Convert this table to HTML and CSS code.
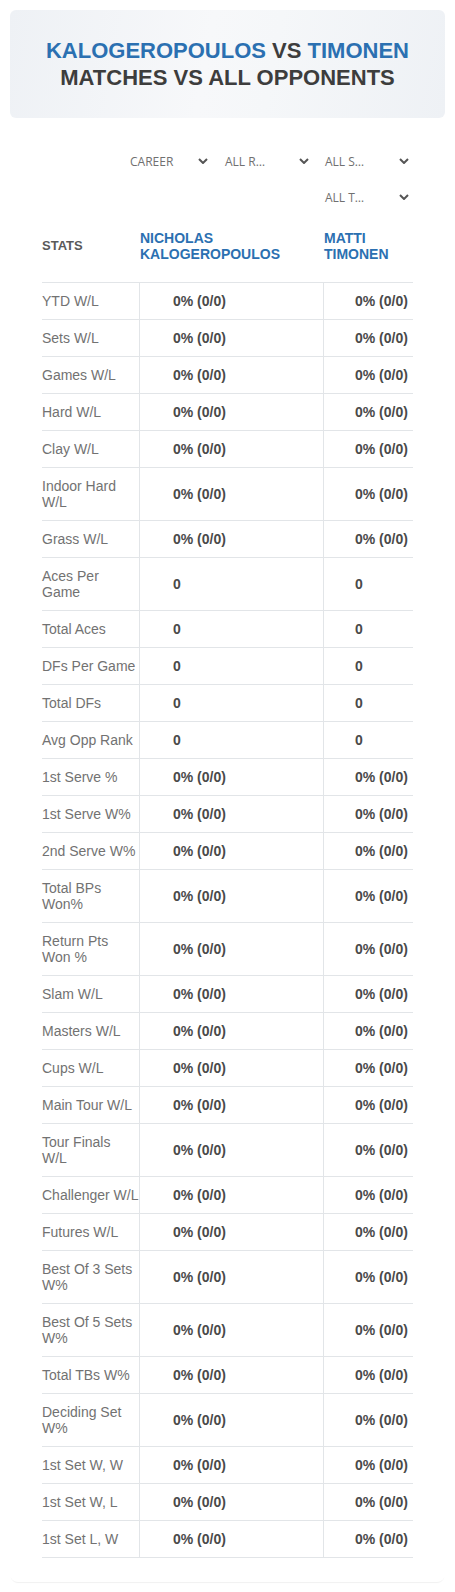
FILE: index.html
```html
<!DOCTYPE html>
<html lang="en">
<head>
<meta charset="utf-8">
<title>Kalogeropoulos vs Timonen</title>
<link rel="stylesheet" href="styles.css">
</head>
<body>
<div class="page">
  <header class="hero">
    <h1 class="hero-title">
      <span class="blue">KALOGEROPOULOS</span> VS <span class="blue">TIMONEN</span><br>
      MATCHES VS ALL OPPONENTS
    </h1>
  </header>

  <section class="card">
    <div class="filters">
      <div class="select select-first"><span>CAREER</span><svg class="chev" viewBox="0 0 10 6" width="10" height="6"><path d="M1 1l4 4 4-4" fill="none" stroke="#555" stroke-width="2"/></svg></div>
      <div class="select"><span>ALL R…</span><svg class="chev" viewBox="0 0 10 6" width="10" height="6"><path d="M1 1l4 4 4-4" fill="none" stroke="#555" stroke-width="2"/></svg></div>
      <div class="select"><span>ALL S…</span><svg class="chev" viewBox="0 0 10 6" width="10" height="6"><path d="M1 1l4 4 4-4" fill="none" stroke="#555" stroke-width="2"/></svg></div>
      <div class="select"><span>ALL T…</span><svg class="chev" viewBox="0 0 10 6" width="10" height="6"><path d="M1 1l4 4 4-4" fill="none" stroke="#555" stroke-width="2"/></svg></div>
    </div>

    <table class="stats">
      <colgroup><col class="c1"><col class="c2"><col class="c3"></colgroup>
      <thead>
        <tr>
          <th class="th-stats">STATS</th>
          <th class="th-player">NICHOLAS<br>KALOGEROPOULOS</th>
          <th class="th-player">MATTI<br>TIMONEN</th>
        </tr>
      </thead>
      <tbody>
        <tr><td>YTD W/L</td><td>0% (0/0)</td><td>0% (0/0)</td></tr>
        <tr><td>Sets W/L</td><td>0% (0/0)</td><td>0% (0/0)</td></tr>
        <tr><td>Games W/L</td><td>0% (0/0)</td><td>0% (0/0)</td></tr>
        <tr><td>Hard W/L</td><td>0% (0/0)</td><td>0% (0/0)</td></tr>
        <tr><td>Clay W/L</td><td>0% (0/0)</td><td>0% (0/0)</td></tr>
        <tr><td>Indoor Hard W/L</td><td>0% (0/0)</td><td>0% (0/0)</td></tr>
        <tr><td>Grass W/L</td><td>0% (0/0)</td><td>0% (0/0)</td></tr>
        <tr><td>Aces Per Game</td><td>0</td><td>0</td></tr>
        <tr><td>Total Aces</td><td>0</td><td>0</td></tr>
        <tr><td>DFs Per Game</td><td>0</td><td>0</td></tr>
        <tr><td>Total DFs</td><td>0</td><td>0</td></tr>
        <tr><td>Avg Opp Rank</td><td>0</td><td>0</td></tr>
        <tr><td>1st Serve %</td><td>0% (0/0)</td><td>0% (0/0)</td></tr>
        <tr><td>1st Serve W%</td><td>0% (0/0)</td><td>0% (0/0)</td></tr>
        <tr><td>2nd Serve W%</td><td>0% (0/0)</td><td>0% (0/0)</td></tr>
        <tr><td>Total BPs Won%</td><td>0% (0/0)</td><td>0% (0/0)</td></tr>
        <tr><td>Return Pts Won %</td><td>0% (0/0)</td><td>0% (0/0)</td></tr>
        <tr><td>Slam W/L</td><td>0% (0/0)</td><td>0% (0/0)</td></tr>
        <tr><td>Masters W/L</td><td>0% (0/0)</td><td>0% (0/0)</td></tr>
        <tr><td>Cups W/L</td><td>0% (0/0)</td><td>0% (0/0)</td></tr>
        <tr><td>Main Tour W/L</td><td>0% (0/0)</td><td>0% (0/0)</td></tr>
        <tr><td>Tour Finals W/L</td><td>0% (0/0)</td><td>0% (0/0)</td></tr>
        <tr><td>Challenger W/L</td><td>0% (0/0)</td><td>0% (0/0)</td></tr>
        <tr><td>Futures W/L</td><td>0% (0/0)</td><td>0% (0/0)</td></tr>
        <tr><td>Best Of 3 Sets W%</td><td>0% (0/0)</td><td>0% (0/0)</td></tr>
        <tr><td>Best Of 5 Sets W%</td><td>0% (0/0)</td><td>0% (0/0)</td></tr>
        <tr><td>Total TBs W%</td><td>0% (0/0)</td><td>0% (0/0)</td></tr>
        <tr><td>Deciding Set W%</td><td>0% (0/0)</td><td>0% (0/0)</td></tr>
        <tr><td>1st Set W, W</td><td>0% (0/0)</td><td>0% (0/0)</td></tr>
        <tr><td>1st Set W, L</td><td>0% (0/0)</td><td>0% (0/0)</td></tr>
        <tr><td>1st Set L, W</td><td>0% (0/0)</td><td>0% (0/0)</td></tr>
      </tbody>
    </table>
  </section>
</div>
</body>
</html>
```

FILE: styles.css
```css
* { box-sizing: border-box; }

body {
  margin: 0;
  background: #ffffff;
  font-family: "Liberation Sans", Arial, sans-serif;
  color: #444;
}

.page {
  padding: 10px;
}

.hero {
  height: 108px;
  border-radius: 6px;
  background: linear-gradient(100deg, #eef1f5 0%, #f7f8fa 45%, #f5f7f9 60%, #eef1f5 100%);
  display: flex;
  align-items: center;
  justify-content: center;
}

.hero-title {
  margin: 0;
  font-size: 22px;
  line-height: 27px;
  font-weight: 700;
  text-align: center;
  color: #3d3d3d;
}

.blue { color: #2b70b1; }

.card {
  margin-top: 10px;
  padding: 15px 32px 24px;
  border-radius: 8px;
  background: #fff;
  box-shadow: 0 2px 1px -1px rgba(0, 0, 0, 0.06);
}

.filters {
  display: flex;
  flex-wrap: wrap;
  justify-content: flex-end;
}

.select {
  width: 100px;
  height: 36px;
  display: flex;
  align-items: center;
  justify-content: space-between;
  padding: 0 4px 0 12px;
  font-family: "Open Sans", "Noto Sans", sans-serif;
  font-size: 12px;
  color: #707070;
}

.select-first {
  width: 95px;
  padding-left: 12px;
  padding-right: 5px;
}

.chev { display: block; }

.stats {
  width: 100%;
  table-layout: fixed;
  border-collapse: separate;
  border-spacing: 0;
  font-size: 14px;
}

.c1 { width: 97px; }
.c2 { width: 184px; }
.c3 { width: 90px; }

.stats th {
  text-align: left;
  font-weight: 700;
  padding: 15px 0 20px;
  border-bottom: 1px solid #e2e5e8;
  vertical-align: middle;
  line-height: 16px;
}

.th-stats {
  font-size: 13px;
  color: #5a5a5a;
}

.th-player {
  font-size: 14px;
  color: #2b70b1;
  padding-left: 1px !important;
}

.stats td {
  padding: 10px 0;
  border-bottom: 1px solid #e2e5e8;
  vertical-align: middle;
  line-height: 16px;
}

.stats td:first-child {
  color: #727272;
}

.stats td:nth-child(2),
.stats td:nth-child(3) {
  border-left: 1px solid #e2e5e8;
  font-weight: 700;
  color: #4a4a4a;
}

.stats td:nth-child(2) { padding-left: 33px; }
.stats td:nth-child(3) { padding-left: 31px; }
```
